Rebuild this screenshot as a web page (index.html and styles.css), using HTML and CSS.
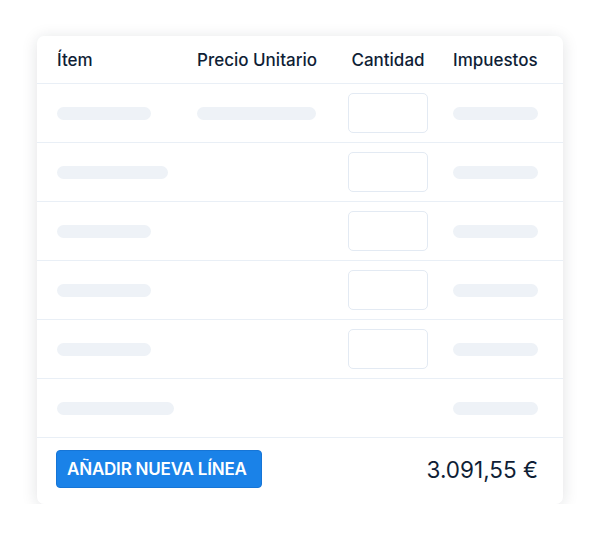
FILE: index.html
```html
<!DOCTYPE html>
<html lang="es">
<head>
  <meta charset="UTF-8" />
  <title>Líneas de factura</title>
  <link rel="stylesheet" href="styles.css">
</head>
<body>
  <div class="card">
    <div class="row head">
      <div>Ítem</div>
      <div>Precio Unitario</div>
      <div class="center">Cantidad</div>
      <div>Impuestos</div>
    </div>

    <div class="row">
      <div><span class="bar" style="width:94px"></span></div>
      <div><span class="bar" style="width:119px"></span></div>
      <div><span class="qty"></span></div>
      <div><span class="bar" style="width:85px"></span></div>
    </div>
    <div class="row">
      <div><span class="bar" style="width:111px"></span></div>
      <div></div>
      <div><span class="qty"></span></div>
      <div><span class="bar" style="width:85px"></span></div>
    </div>
    <div class="row">
      <div><span class="bar" style="width:94px"></span></div>
      <div></div>
      <div><span class="qty"></span></div>
      <div><span class="bar" style="width:85px"></span></div>
    </div>
    <div class="row">
      <div><span class="bar" style="width:94px"></span></div>
      <div></div>
      <div><span class="qty"></span></div>
      <div><span class="bar" style="width:85px"></span></div>
    </div>
    <div class="row">
      <div><span class="bar" style="width:94px"></span></div>
      <div></div>
      <div><span class="qty"></span></div>
      <div><span class="bar" style="width:85px"></span></div>
    </div>
    <div class="row">
      <div><span class="bar" style="width:117px"></span></div>
      <div></div>
      <div></div>
      <div><span class="bar" style="width:85px"></span></div>
    </div>

    <div class="footer">
      <button>Añadir nueva línea</button>
      <div class="total">3.091,55 €</div>
    </div>
  </div>
</body>
</html>
```

FILE: styles.css
```css
body {
  margin: 0;
  padding: 36px 0 0 37px;
  background: #ffffff;
  font-family: Inter, "Noto Sans", sans-serif;
  color: #0f1e36;
}
.card {
  width: 526px;
  background: white;
  border-radius: 7px;
  box-shadow: 0 2px 16px rgba(20, 30, 50, 0.13);
  overflow: hidden;
}
.row {
  display: grid;
  grid-template-columns: 140px 151px 80px 1fr;
  align-items: center;
  height: 58px;
  padding: 0 25px 0 20px;
  border-bottom: 1px solid #e9eff6;
}
.row > div:last-child {
  padding-left: 25px;
}
.head {
  height: 46px;
  font-size: 17px;
  font-weight: 500;
  padding-top: 1px;
  white-space: nowrap;
}
.center {
  text-align: center;
}
.bar {
  display: block;
  height: 13px;
  border-radius: 7px;
  background: #eef2f7;
}
.qty {
  display: block;
  width: 78px;
  height: 38px;
  border: 1px solid #e3eaf3;
  border-radius: 5px;
}
.footer {
  display: flex;
  align-items: center;
  justify-content: space-between;
  height: 62px;
  padding: 0 25px 4px 19px;
}
button {
  background: #1a82e8;
  color: white;
  border: 1px solid #1675d6;
  border-radius: 4px;
  height: 38px;
  padding: 0 0 0 10px;
  width: 206px;
  text-align: left;
  font-family: Inter, "Noto Sans", sans-serif;
  font-size: 17px;
  font-weight: 600;
  text-transform: uppercase;
  letter-spacing: -0.2px;
  white-space: nowrap;
}
.total {
  font-size: 22.5px;
}
```
